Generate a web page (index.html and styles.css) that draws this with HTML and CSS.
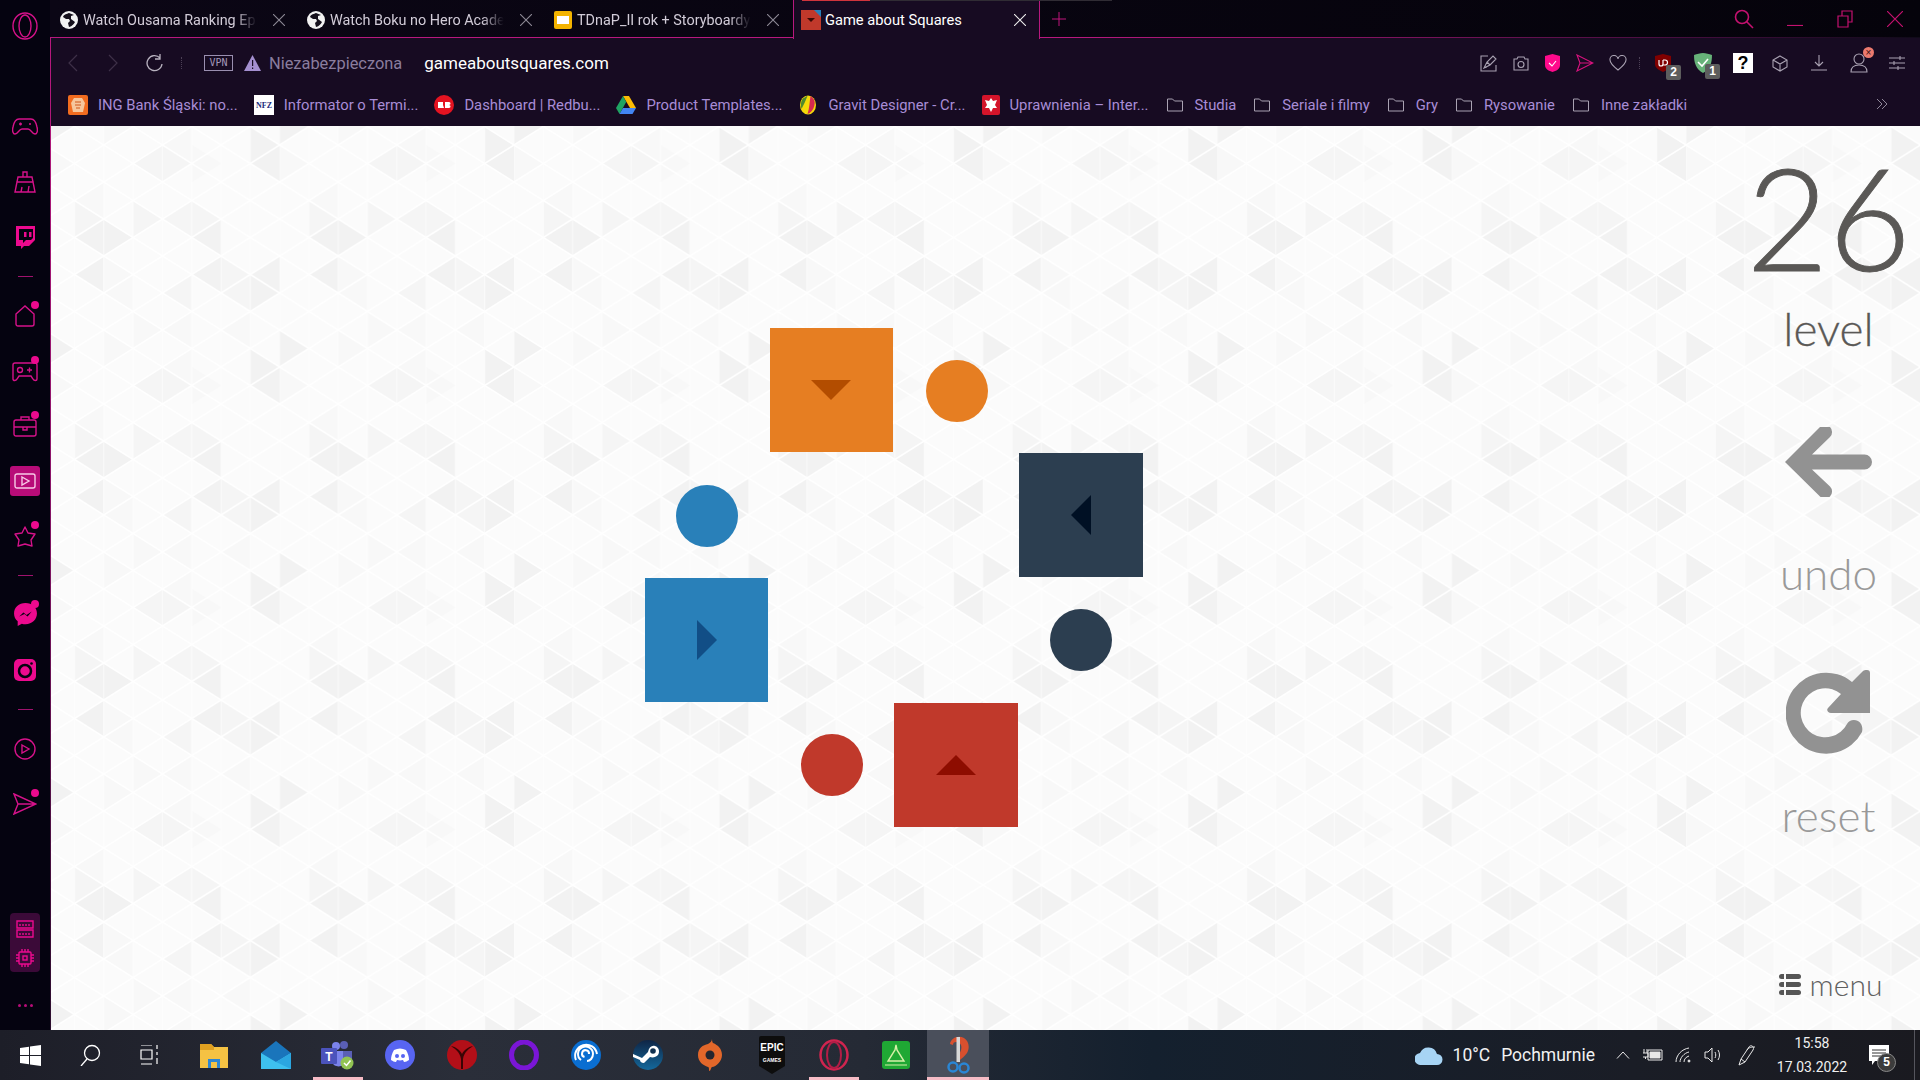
FILE: index.html
```html
<!DOCTYPE html>
<html lang="pl">
<head>
<meta charset="utf-8">
<title>Game about Squares</title>
<link rel="stylesheet" href="styles.css">
</head>
<body>
<div class="desktop">
  <div class="browser">
    <aside class="sidebar">
      <div class="logo"><svg width="26" height="28" viewBox="0 0 26 28"><ellipse cx="13" cy="14" rx="12" ry="13"/><ellipse cx="13" cy="14" rx="6" ry="11"/></svg></div>
      <div class="side-item"><svg width="26" height="24" viewBox="0 0 26 24"><path d="M7 4h12c3 0 5 3 6 8 1 4 0 7-2 7-3 0-4-5-7-5h-6c-3 0-4 5-7 5-2 0-3-3-2-7 1-5 3-8 6-8z"/><path d="M7 9h3M8.500 7.500v3M17 9h2"/></svg></div>
      <div class="side-item"><svg width="24" height="24" viewBox="0 0 24 24"><path d="M10 7V2h4v5M5 7h14l1 5H4zM4 12l-2 10h20l-2-10M8 22l1-5M15 22l1-6"/></svg></div>
      <div class="side-item"><svg width="24" height="24" viewBox="0 0 24 24"><path class="solid" d="M3 1h19v14l-6 6h-5l-3 3v-3H3zM6 4v11h4v3l3-3h5l2-2V4z"/><path class="solid" d="M11 7h2.500v5H11zM16 7h2.500v5H16z"/></svg></div>
      <div class="side-rule"></div>
      <div class="side-item dot"><svg width="20" height="22" viewBox="0 0 20 22"><path d="M1 9l9-8 9 8v10a2 2 0 0 1-2 2H3a2 2 0 0 1-2-2z"/></svg></div>
      <div class="side-item dot"><svg width="26" height="22" viewBox="0 0 26 22"><path d="M3 3h20a2 2 0 0 1 2 2v14c0 2-3 2-4 0l-2-3H7l-2 3c-1 2-4 2-4 0V5a2 2 0 0 1 2-2z"/><circle cx="8" cy="10" r="2.500"/><path d="M15 10h5M17.500 7.500v5"/></svg></div>
      <div class="side-item dot"><svg width="24" height="22" viewBox="0 0 24 22"><rect x="1" y="5" width="22" height="16" rx="2"/><path d="M8 5V2h8v3M1 12h22M10 12h4v3h-4z"/></svg></div>
      <div class="side-item"><div class="side-active"><svg width="22" height="16" viewBox="0 0 22 16"><rect x="1" y="1" width="20" height="14" rx="2"/><path d="M8 4l7 4-7 4z"/></svg></div></div>
      <div class="side-item dot"><svg width="22" height="22" viewBox="0 0 22 22"><path d="M11 2l3 6 7 1-4 6 1 6-7-2-7 2 1-6-4-6 7-1z" stroke-linejoin="round"/></svg></div>
      <div class="side-rule"></div>
      <div class="side-item dot"><svg width="25" height="25" viewBox="0 0 24 24"><path class="solid" d="M12 1C5.500 1 1 5.500 1 11c0 3 1.300 5.700 3.500 7.500V23l4-2.200c1.100.3 2.300.5 3.500.5 6.500 0 11-4.800 11-10.300S18.500 1 12 1z"/><path class="cut" d="M6 14l4-4 3 2.500L18 9l-4 5-3-2.500z"/></svg></div>
      <div class="side-item"><svg width="22" height="22" viewBox="0 0 22 22"><rect class="solid" width="22" height="22" rx="5"/><circle class="ring-dark" cx="11" cy="12" r="6"/><circle class="cut" cx="17.500" cy="4.500" r="1.300"/></svg></div>
      <div class="side-rule"></div>
      <div class="side-item"><svg width="22" height="22" viewBox="0 0 22 22"><circle cx="11" cy="11" r="10"/><path d="M8 7l7 4-7 4z"/></svg></div>
      <div class="side-item dot"><svg width="24" height="22" viewBox="0 0 24 22"><path d="M1 1l22 10L1 21l4-10zM5 11h18"/></svg></div>
      <div class="side-box">
        <svg width="18" height="18" viewBox="0 0 18 18"><path d="M1 1h16v7H1zM1 10h16v7H1zM4 6V4M7 6V4M10 6V4M13 6V4M4 15v-2M7 15v-2M10 15v-2M13 15v-2"/></svg>
        <svg width="20" height="20" viewBox="0 0 20 20"><rect x="4" y="4" width="12" height="12" rx="1"/><rect x="8" y="8" width="4" height="4"/><path d="M7 1v3M10 1v3M13 1v3M7 16v3M10 16v3M13 16v3M1 7h3M1 10h3M1 13h3M16 7h3M16 10h3M16 13h3"/></svg>
      </div>
      <div class="side-more"><span></span><span></span><span></span></div>
    </aside>

    <div class="main">
      <div class="tabstrip">
        <div class="tab">
          <svg class="fav" width="18" height="18" viewBox="0 0 18 18"><circle cx="9" cy="9" r="9" fill="#f2f2f2"/><path d="M9 2C7 3 4 3 3 6l3 2 3 0 1 2-2 2 1 4c2 0 5-3 6-5l-4-3V5l3-1z" fill="#15101c"/></svg>
          <span class="tab-title">Watch Ousama Ranking Ep</span>
          <svg class="tab-x" width="12" height="12" viewBox="0 0 12 12"><path d="M0 0l12 12M12 0L0 12"/></svg>
        </div>
        <div class="tab">
          <svg class="fav" width="18" height="18" viewBox="0 0 18 18"><circle cx="9" cy="9" r="9" fill="#f2f2f2"/><path d="M9 2C7 3 4 3 3 6l3 2 3 0 1 2-2 2 1 4c2 0 5-3 6-5l-4-3V5l3-1z" fill="#15101c"/></svg>
          <span class="tab-title">Watch Boku no Hero Acade</span>
          <svg class="tab-x" width="12" height="12" viewBox="0 0 12 12"><path d="M0 0l12 12M12 0L0 12"/></svg>
        </div>
        <div class="tab">
          <svg class="fav" width="18" height="18" viewBox="0 0 18 18"><rect width="18" height="18" rx="2" fill="#f4b400"/><rect x="3" y="5" width="12" height="8" fill="#fff"/></svg>
          <span class="tab-title">TDnaP_II rok + Storyboardy</span>
          <svg class="tab-x" width="12" height="12" viewBox="0 0 12 12"><path d="M0 0l12 12M12 0L0 12"/></svg>
        </div>
        <div class="tab tab-active">
          <svg class="fav" width="20" height="20" viewBox="0 0 20 20"><rect width="20" height="20" fill="#c0392b"/><path d="M13 0h7v7z" fill="#2980b9"/><path d="M6 8h8l-4 4z" fill="#3b0a05"/></svg>
          <span class="tab-title">Game about Squares</span>
          <svg class="tab-x" width="12" height="12" viewBox="0 0 12 12"><path d="M0 0l12 12M12 0L0 12"/></svg>
        </div>
        <svg class="tab-plus" width="14" height="14" viewBox="0 0 14 14"><path d="M7 0v14M0 7h14"/></svg>
        <div class="win-ctrl">
          <svg class="win-search" width="20" height="20" viewBox="0 0 20 20"><circle cx="8" cy="8" r="6.500"/><path d="M12.500 12.500L19 19"/></svg>
          <svg class="win-btn" width="16" height="14" viewBox="0 0 16 14"><path d="M0 13.500h16"/></svg>
          <svg class="win-btn" width="16" height="18" viewBox="0 0 16 18"><path d="M1 6h10v11H1zM5 6V1h10v11h-4"/></svg>
          <svg class="win-btn" width="16" height="16" viewBox="0 0 16 16"><path d="M0 0l16 16M16 0L0 16"/></svg>
        </div>
      </div>

      <div class="panel">
        <div class="addressbar">
          <svg class="nav" width="10" height="18" viewBox="0 0 10 18"><path d="M9 1L1 9l8 8"/></svg>
          <svg class="nav nav-fwd" width="10" height="18" viewBox="0 0 10 18"><path d="M1 1l8 8-8 8"/></svg>
          <svg class="nav-reload" width="18" height="18" viewBox="0 0 18 18"><path d="M15 4a7.500 7.500 0 1 0 2 6M15 0v5h-5"/></svg>
          <span class="vdots"></span>
          <span class="vpn">VPN</span>
          <svg class="warn" width="17" height="16" viewBox="0 0 17 16"><path d="M8.500 0L17 16H0z" fill="#a48fd0"/><path d="M8 5h1.200v6H8zM8 12.500h1.200V14H8z" fill="#170b22"/></svg>
          <span class="insecure">Niezabezpieczona</span>
          <span class="url">gameaboutsquares.com</span>
          <div class="tools">
            <svg class="t t-edit" width="18" height="18" viewBox="0 0 18 18"><path d="M8 2H1v15h15v-6"/><path d="M4 14l3-6 6-6 3 3-6 6zM7 8l3 3M4 14l3-1"/></svg>
            <svg class="t t-cam" width="16" height="15" viewBox="0 0 16 15"><path d="M1 3h3l1-2h6l1 2h3v11H1z"/><circle cx="8" cy="8.500" r="3"/></svg>
            <svg class="t t-shield" width="15" height="18" viewBox="0 0 15 18"><path d="M7.500 0L15 2v9c0 4-4 6-7.500 7C4 17 0 15 0 11V2z" fill="#ff0a8c" stroke="none"/><path d="M4 9l3 3 4-5" stroke="#fff"/></svg>
            <svg class="t t-send" width="18" height="18" viewBox="0 0 18 18"><path d="M1 1l16 8-16 8 3-8zM4 9h13"/></svg>
            <svg class="t t-heart" width="18" height="16" viewBox="0 0 18 16"><path d="M9 15C4 11 1 8 1 5a4 4 0 0 1 8-1 4 4 0 0 1 8 1c0 3-3 6-8 10z"/></svg>
            <span class="vdots t-dots"></span>
            <span class="ext t-ub"><svg width="16" height="18" viewBox="0 0 16 18"><path d="M8 0l8 2v8c0 4-4 6-8 8-4-2-8-4-8-8V2z" fill="#800000"/><path d="M4 6v4a2 2 0 0 0 4 0V6M8 6h2a2.500 2.500 0 0 1 0 5H8" fill="none" stroke="#fff" stroke-width="1.200"/></svg><b>2</b></span>
            <span class="ext t-ag"><svg width="18" height="20" viewBox="0 0 18 20"><path d="M9 0c3 0 6 1 9 2 0 8-2 14-9 18C2 16 0 10 0 2c3-1 6-2 9-2z" fill="#67b279"/><path d="M4 9l4 4 6-7" fill="none" stroke="#fff" stroke-width="1.600"/></svg><b>1</b></span>
            <span class="t-q">?</span>
            <svg class="t t-cube" width="16" height="17" viewBox="0 0 16 17"><path d="M8 1l7 4v7l-7 4-7-4V5zM1 5l7 4 7-4M8 9v7"/></svg>
            <svg class="t t-dl" width="16" height="16" viewBox="0 0 16 16"><path d="M8 0v11M4 7l4 4 4-4M0 15h16"/></svg>
            <span class="t-user"><svg class="t" width="18" height="20" viewBox="0 0 18 20"><circle cx="9" cy="6" r="5"/><path d="M1 19c0-6 4-7 8-7s8 1 8 7z"/></svg><i>×</i></span>
            <svg class="t t-sliders" width="16" height="16" viewBox="0 0 16 16"><path d="M0 3h16M0 8h16M0 13h16M11 1v4M5 6v4M9 11v4"/></svg>
          </div>
        </div>
        <div class="bookmarks">
          <div class="bm"><svg width="20" height="20" viewBox="0 0 20 20"><rect width="20" height="20" rx="2" fill="#f26c1f"/><path d="M6 3h8l3 5-2 9H5L3 8z" fill="#f6c79c"/><path d="M7 7h6M7 10h6M8 13h4" stroke="#d0561a"/></svg><span>ING Bank Śląski: no...</span></div>
          <div class="bm"><svg width="20" height="20" viewBox="0 0 20 20"><rect width="20" height="20" fill="#fff"/><text x="10" y="13" text-anchor="middle" class="nfz">NFZ</text></svg><span>Informator o Termi...</span></div>
          <div class="bm"><svg width="20" height="20" viewBox="0 0 20 20"><circle cx="10" cy="10" r="10" fill="#e41321"/><path d="M4 7h5v3l1 3H4zM11 7h4c2 0 2 3 0 3 2 0 2 3 0 3h-4z" fill="#fff"/></svg><span>Dashboard | Redbu...</span></div>
          <div class="bm"><svg width="20" height="18" viewBox="0 0 20 18"><path d="M7 0h6l7 12h-6z" fill="#fbbc04"/><path d="M7 0l3.200 6L3.500 18 0 12z" fill="#1fa463"/><path d="M3.500 18L7 12h13l-3.500 6z" fill="#4285f4"/></svg><span>Product Templates...</span></div>
          <div class="bm"><svg width="20" height="20" viewBox="-1.500 0 20 20"><ellipse cx="8.500" cy="10" rx="8" ry="9.500" fill="#f5d90a"/><path d="M11 1c3 2 5 5 4 9-1 5-4 8-7 9 2-6 2-12 3-18z" fill="#d62a4e"/><path d="M3 4c1-1 4-3 5-3-2 5-4 9-6 13-1-3-1-7 1-10z" fill="#4f8a2e"/></svg><span>Gravit Designer - Cr...</span></div>
          <div class="bm"><svg width="18" height="20" viewBox="0 0 18 20"><rect width="18" height="20" rx="2" fill="#d4142a"/><path d="M9 3l2 3 4-1-2 5 2 3-4 0-2 4-2-4-4 0 2-3-2-5 4 1z" fill="#fff"/></svg><span>Uprawnienia – Inter...</span></div>
          <div class="bm bm-folder"><svg class="folder" width="16" height="14" viewBox="0 0 16 14"><path d="M.5 1h5l2 2h8v10H.5z"/></svg><span>Studia</span></div>
          <div class="bm bm-folder"><svg class="folder" width="16" height="14" viewBox="0 0 16 14"><path d="M.5 1h5l2 2h8v10H.5z"/></svg><span>Seriale i filmy</span></div>
          <div class="bm bm-folder"><svg class="folder" width="16" height="14" viewBox="0 0 16 14"><path d="M.5 1h5l2 2h8v10H.5z"/></svg><span>Gry</span></div>
          <div class="bm bm-folder"><svg class="folder" width="16" height="14" viewBox="0 0 16 14"><path d="M.5 1h5l2 2h8v10H.5z"/></svg><span>Rysowanie</span></div>
          <div class="bm bm-folder"><svg class="folder" width="16" height="14" viewBox="0 0 16 14"><path d="M.5 1h5l2 2h8v10H.5z"/></svg><span>Inne zakładki</span></div>
          <svg class="bm-more" width="12" height="10" viewBox="0 0 12 10"><path d="M1 0l5 5-5 5M6 0l5 5-5 5"/></svg>
        </div>

        <main class="game">
          <svg class="game-bg" width="100%" height="100%">
            <defs>
              <pattern id="tiles" x="228.6" y="19" width="234.4" height="222" patternUnits="userSpaceOnUse">
                <rect x="0" y="0" width="234.400" height="222" fill="#fbfbfb"/>
                <g fill="#f2f2f2">
                  <polygon points="234.4,0 205.1,-18.5 205.1,18.5"/>
                  <polygon points="234.4,222 205.1,203.5 205.1,240.5"/>
                  <polygon points="205.1,18.5 234.4,0 234.4,37"/>
                  <polygon points="29.3,203.5 0,185 0,222"/>
                  <polygon points="29.3,92.5 58.6,74 58.6,111"/>
                  <polygon points="87.9,92.5 58.6,74 58.6,111"/>
                  <polygon points="146.5,92.5 175.8,74 175.8,111"/>
                  <polygon points="205.1,129.5 234.4,111 234.4,148"/>
                  <polygon points="29.3,129.5 58.6,111 58.6,148"/>
                  <polygon points="146.5,129.5 175.8,111 175.8,148"/>
                  <polygon points="234.4,148 205.1,129.5 205.1,166.5"/>
                </g>
                <g fill="#f5f5f5">
                  <polygon points="87.9,18.5 117.2,0 117.2,37"/>
                  <polygon points="146.5,18.5 117.2,0 117.2,37"/>
                  <polygon points="117.2,74 87.9,55.5 87.9,92.5"/>
                  <polygon points="117.2,74 146.5,55.5 146.5,92.5"/>
                  <polygon points="117.2,148 146.5,129.5 146.5,166.5"/>
                  <polygon points="205.1,129.5 175.8,111 175.8,148"/>
                  <polygon points="58.6,74 29.3,55.5 29.3,92.5"/>
                  <polygon points="175.8,74 146.5,55.5 146.5,92.5"/>
                  <polygon points="175.8,148 205.1,129.5 205.1,166.5"/>
                </g>
                <g fill="#f8f8f8">
                  <polygon points="117.2,0 146.5,-18.5 146.5,18.5"/>
                  <polygon points="117.2,222 146.5,203.5 146.5,240.5"/>
                  <polygon points="117.2,185 146.5,166.5 146.5,203.5"/>
                  <polygon points="117.2,185 87.9,166.5 87.9,203.5"/>
                  <polygon points="175.8,185 205.1,166.5 205.1,203.5"/>
                  <polygon points="87.9,203.5 58.6,185 58.6,222"/>
                  <polygon points="29.3,55.5 58.6,37 58.6,74"/>
                  <polygon points="87.9,129.5 58.6,111 58.6,148"/>
                  <polygon points="58.6,148 87.9,129.5 87.9,166.5"/>
                  <polygon points="175.8,18.5 146.5,0 146.5,37"/>
                  <polygon points="29.3,18.5 0,0 0,37"/>
                </g>
                <path class="tile-v" d="M0 0V222M29.300 0V222M58.600 0V222M87.900 0V222M117.200 0V222M146.500 0V222M175.800 0V222M205.100 0V222"/>
                <path class="tile-d" d="M0 -148L234.400 0M0 -111L234.400 37M0 -74L234.400 74M0 -37L234.400 111M0 0L234.400 148M0 37L234.400 185M0 74L234.400 222M0 111L234.400 259M0 148L234.400 296M0 185L234.400 333M0 222L234.400 370M0 0L234.400 -148M0 37L234.400 -111M0 74L234.400 -74M0 111L234.400 -37M0 148L234.400 0M0 185L234.400 37M0 222L234.400 74M0 259L234.400 111M0 296L234.400 148M0 333L234.400 185M0 370L234.400 222"/>
              </pattern>
            </defs>
            <rect width="100%" height="100%" fill="url(#tiles)"/>
          </svg>
          <div class="board-wrap">
            <div class="board">
              <div class="square orange c2 r1"><span class="arrow down"></span></div>
              <div class="goal orange c3 r1"></div>
              <div class="goal blue c1 r2"></div>
              <div class="square navy c4 r2"><span class="arrow left"></span></div>
              <div class="square blue c1 r3"><span class="arrow right"></span></div>
              <div class="goal navy c4 r3"></div>
              <div class="goal red c2 r4"></div>
              <div class="square red c3 r4"><span class="arrow up"></span></div>
            </div>
          </div>
          <div class="hud">
            <div class="level-num">26</div>
            <div class="hud-label dark">level</div>
            <svg class="hud-undo" width="87" height="70" viewBox="0 0 87 70"><path d="M87 35a7.500 7.500 0 0 1-7.500 7.500H27l18 17a7 7 0 0 1-10 10L0 35 35 0a7 7 0 0 1 10 10L27 27.500h52.500A7.500 7.500 0 0 1 87 35z"/></svg>
            <div class="hud-label undo-label">undo</div>
            <svg class="hud-reset" width="85" height="85" viewBox="0 0 85 85"><path d="M81 0c2 0 3 1 3 3v40H45c-3 0-5-3-3-5L55 24a24.500 24.500 0 1 0 6 30c2-4 7-5 11-3 4 2 5 7 4 11A40.500 40.500 0 1 1 66 12l11-11c1-1 2-1 4-1z"/></svg>
            <div class="hud-label reset-label">reset</div>
            <div class="menu">
              <span class="menu-ic"><i></i><i></i><i></i></span>
              <span>menu</span>
            </div>
          </div>
        </main>
      </div>
    </div>
  </div>

  <footer class="taskbar">
    <div class="apps">
      <div class="app sys"><svg width="21" height="21" viewBox="0 0 21 21"><path fill="#fff" d="M0 3l9-1.300V10H0zM10 1.500L21 0v10H10zM0 11h9v8.300L0 18zM10 11h11v10l-11-1.500z"/></svg></div>
      <div class="app sys"><svg width="22" height="22" viewBox="0 0 22 22" fill="none" stroke="#fff" stroke-width="1.300"><circle cx="13" cy="9" r="7.500"/><path d="M8 15l-6 7"/></svg></div>
      <div class="app sys sys-last"><svg width="20" height="20" viewBox="0 0 20 20" fill="none" stroke="#fff" stroke-width="1.200"><path d="M1 0h11M1 19h11M1 5h11v9H1zM17 0v4M17 7v3M17 13v6"/></svg></div>
      <div class="app"><svg width="28" height="26" viewBox="0 0 28 26"><path d="M0 2h11l3 3h14v21H0z" fill="#f5c243"/><path d="M0 2h11l3 3v3H0z" fill="#e0a020"/><path d="M8 26v-9h12v9h-3v-6h-6v6z" fill="#2f86d0"/></svg></div>
      <div class="app"><svg width="30" height="28" viewBox="0 0 30 28"><path d="M15 0L0 12v16h30V12z" fill="#1a75bb"/><path d="M0 12l15 9 15-9v16H0z" fill="#3ec0ee"/><path d="M15 21L30 12v16z" fill="#2ba6e0"/></svg></div>
      <div class="app on"><svg width="34" height="30" viewBox="0 0 34 30"><circle cx="23" cy="5" r="4" fill="#5a5fb5"/><circle cx="15" cy="6" r="4" fill="#7b83eb"/><path d="M18 11h13v10c-2 4-9 4-12 2z" fill="#5a5fb5"/><path d="M10 11h12v14c-4 3-10 1-11-3z" fill="#7b83eb"/><rect x="0" y="8" width="16" height="16" rx="1" fill="#4b53bc"/><text x="8" y="21" text-anchor="middle" class="teams-t">T</text><circle cx="26" cy="23" r="6.500" fill="#92c353"/><path d="M23 23l2.500 2.500 4-5" stroke="#fff" fill="none" stroke-width="1.500"/></svg></div>
      <div class="app"><svg width="30" height="30" viewBox="0 0 30 30"><circle cx="15" cy="15" r="15" fill="#5865f2"/><path d="M9 10c4-2 8-2 12 0 2 3 3 7 3 10-2 1-3 2-5 2l-1-2c-2 .5-4 .5-6 0l-1 2c-2 0-3-1-5-2 0-3 1-7 3-10z" fill="#fff"/><circle cx="12" cy="16" r="2" fill="#5865f2"/><circle cx="18" cy="16" r="2" fill="#5865f2"/></svg></div>
      <div class="app"><svg width="30" height="30" viewBox="0 0 30 30"><circle cx="15" cy="15" r="15" fill="#b30f18"/><path d="M4 6c5 1 9 4 11 8 2-4 6-7 11-8-4 3-9 6-10 13v10h-2V19C13 12 8 9 4 6z" fill="#3a0505"/></svg></div>
      <div class="app"><svg width="30" height="30" viewBox="0 0 30 30"><ellipse cx="15" cy="15" rx="12.500" ry="13" fill="none" stroke="#7a16d6" stroke-width="5"/></svg></div>
      <div class="app"><svg width="30" height="30" viewBox="0 0 30 30"><circle cx="15" cy="15" r="15" fill="#0a6ed1"/><path d="M5 20A11 11 0 1 1 26 14M10 20A7.500 7.500 0 1 1 22 14c0 4-3 7-6 7M13.500 17A3.500 3.500 0 1 1 18 14" fill="none" stroke="#fff" stroke-width="2"/></svg></div>
      <div class="app"><svg width="30" height="30" viewBox="0 0 30 30"><defs><linearGradient id="steamg" x1="0" y1="0" x2="0" y2="1"><stop offset="0" stop-color="#0f2545"/><stop offset="1" stop-color="#14699c"/></linearGradient></defs><circle cx="15" cy="15" r="15" fill="url(#steamg)"/><path d="M0 14l9 4 6-6c1-5 4-7 7-6 4 1 5 6 3 9-2 2-5 3-8 2l-6 6c-3 0-4-2-4-3L0 17z" fill="#fff"/><circle cx="20" cy="11" r="2.800" fill="#11314f"/></svg></div>
      <div class="app"><svg width="24" height="32" viewBox="0 0 24 32"><path d="M14 0c0 3 1 4 1 4 5 2 9 6 9 12s-6 12-10 12c-1 0-1 4-3 4 0-2 0-4-1-4C5 26 0 23 0 16S5 6 10 5c2-1 4-3 4-5z" fill="#e2672a"/><circle cx="12" cy="16" r="4.500" fill="#24262f"/></svg></div>
      <div class="app"><svg width="26" height="38" viewBox="0 0 26 38"><path d="M2 0h22a2 2 0 0 1 2 2v28l-13 8-13-8V2a2 2 0 0 1 2-2z" fill="#0d0d0d"/><text x="13" y="15" text-anchor="middle" class="epic-1">EPIC</text><text x="13" y="26" text-anchor="middle" class="epic-2">GAMES</text></svg></div>
      <div class="app on"><svg width="30" height="32" viewBox="0 0 30 32"><ellipse cx="15" cy="16" rx="13.500" ry="14.500" fill="none" stroke="#d0244f" stroke-width="2.500"/><ellipse cx="15" cy="16" rx="7" ry="13" fill="none" stroke="#b31d46" stroke-width="2"/></svg></div>
      <div class="app"><svg width="28" height="28" viewBox="0 0 28 28"><rect width="28" height="28" rx="3" fill="#1fa834"/><path d="M14 4l1 5 7 11H6l7-11z" fill="none" stroke="#d6f0a8" stroke-width="1.400"/><path d="M3 24h22" stroke="#d6f0a8"/></svg></div>
      <div class="app on active"><svg width="26" height="38" viewBox="0 0 26 38"><path d="M5 8C6 2 13-1 19 2c5 3 6 10 3 15-2 3-5 5-7 7h-3l2-6c2-3 3-6 2-9-1-2-3-3-5-3-2 0-3 1-3 3z" fill="#d9502e"/><path d="M11.500 1h3.500v25h-3.500z" fill="#d8d8d8"/><circle cx="8" cy="31" r="4.500" fill="none" stroke="#2a86d4" stroke-width="2.500"/><circle cx="19" cy="32" r="4.500" fill="none" stroke="#2a86d4" stroke-width="2.500"/></svg></div>
    </div>
    <div class="tray">
      <svg class="cloud" width="28" height="19" viewBox="0 0 28 19"><path d="M6 19a6 6 0 0 1-1-12 9 9 0 0 1 17 1 5.500 5.500 0 0 1 0 11z" fill="#a7d4f4"/></svg>
      <span class="weather">10°C</span>
      <span class="weather weather-txt">Pochmurnie</span>
      <span class="tray-ic chevron"><svg width="14" height="8" viewBox="0 0 14 8"><path d="M1 7.500L7 1l6 6.500"/></svg></span>
      <span class="tray-ic"><svg width="20" height="12" viewBox="0 0 20 12"><path d="M1 0v4M4 0v4M0 4h5v4H0M2.500 8v2M5 1h14v10H5z"/><path class="fill-w" d="M7 3h10v6H7z"/></svg></span>
      <span class="tray-ic"><svg width="16" height="16" viewBox="0 0 16 16"><path d="M1 15C1 8 7 2 14 1M5 15c0-4 4-9 9-10M9 15c0-3 2-5 5-6"/><circle class="fill-w" cx="14" cy="14" r="1"/></svg></span>
      <span class="tray-ic tray-vol"><svg width="18" height="16" viewBox="0 0 18 16"><path d="M1 5h3l4-4v14l-4-4H1zM11 5c1 2 1 4 0 6M14 3c2 3 2 7 0 10"/></svg></span>
      <span class="tray-ic tray-pen"><svg width="18" height="22" viewBox="0 0 18 22"><path d="M1 21l2-6L11 3c2-3 6 0 4 3L7 18zM3 15l4 3M9 6c2-3 5-3 8-3"/></svg></span>
      <div class="clock"><span>15:58</span><span>17.03.2022</span></div>
      <div class="notify"><svg width="20" height="20" viewBox="0 0 20 20"><path d="M0 0h20v16H6l-3 4v-4H0z" fill="#fff"/><path d="M3 5h14M3 8h14M3 11h14" stroke="#333"/></svg><b>5</b></div>
      <span class="show-desk"></span>
    </div>
  </footer>
</div>
</body>
</html>
```
FILE: styles.css
```css
* { box-sizing: border-box; }
html, body { margin: 0; padding: 0; height: 100%; overflow: hidden; }
body { font-family: Roboto, "Liberation Sans", sans-serif; background: #000; }
svg { display: block; flex: none; }

.desktop { width: 1920px; height: 1080px; display: flex; flex-direction: column; }
.browser { flex: 1; display: flex; min-height: 0; }

/* sidebar */
.sidebar { width: 50px; flex: none; background: #050310; display: flex; flex-direction: column; color: #d6128a; }
.sidebar svg { fill: none; stroke: currentColor; stroke-width: 1.4; }
.sidebar .solid { fill: #ec0a8e; stroke: none; }
.sidebar .cut { fill: #050310; stroke: none; }
.sidebar .ring-dark { stroke: #050310; stroke-width: 2.5; }
.logo { height: 52px; margin-bottom: 47px; padding-top: 12px; display: flex; justify-content: center; }
.side-item { position: relative; height: 55px; display: flex; align-items: center; justify-content: center; }
.side-item.dot::after { content: ""; position: absolute; left: 31px; top: 13px; width: 8px; height: 8px; border-radius: 50%; background: #ec0a8e; }
.side-rule { height: 24px; display: flex; align-items: center; justify-content: center; }
.side-rule::before { content: ""; width: 15px; height: 1px; background: #a0126e; }
.side-active { width: 30px; height: 30px; border-radius: 3px; background: #b80c78; display: flex; align-items: center; justify-content: center; color: #f7c9e6; }
.side-box { width: 30px; height: 59px; margin: auto 0 0 10px; border-radius: 4px; background: #3b0a38; color: #ec0a8e; display: flex; flex-direction: column; align-items: center; justify-content: space-between; padding: 7px 0 4px; }
.side-more { height: 58px; display: flex; gap: 3px; justify-content: center; align-items: center; padding-top: 8px; }
.side-more span { width: 3px; height: 3px; border-radius: 50%; background: #b80c78; }

.main { flex: 1; min-width: 0; display: flex; flex-direction: column; }

/* tabs */
.tabstrip { height: 38px; flex: none; display: flex; padding-left: 2px; background: linear-gradient(90deg, #0b0615, #05030b); position: relative; border-bottom: 1px solid; border-image: linear-gradient(90deg, #b8187e 0%, #b8187e 55%, #3b0d38 90%, #0f0a18 100%) 1; }
.tab { width: 247px; height: 38px; flex: none; display: flex; align-items: center; padding: 2px 14px 0 8px; gap: 5px; color: #d2ccd8; font-size: 14.4px; }
.tab-title { width: 186px; white-space: nowrap; overflow: hidden; -webkit-mask-image: linear-gradient(90deg, #000 84%, transparent 96%); mask-image: linear-gradient(90deg, #000 84%, transparent 96%); }
.tab-x { margin-left: 4px; fill: none; stroke: #8d8996; stroke-width: 1.1; }
.tab-active { background: #170b22; border: solid #b8187e; border-width: 0 1px; color: #fff; padding: 2px 13px 0 7px; gap: 4px; position: relative; z-index: 1; height: 39px; padding-bottom: 1px; font-size: 14.7px; }
.tab-active::before { content: ""; position: absolute; left: 8px; top: 0; width: 310px; height: 1px; background: linear-gradient(90deg, #d0343c 0 22%, #302c34 22%); }
.tab-active .tab-title { width: 180px; -webkit-mask-image: none; mask-image: none; }
.tab-active .tab-x { stroke: #eee; margin-left: 11px; }
.tab-plus { margin: 12px 0 0 12px; fill: none; stroke: #c0157c; stroke-width: 1; }
.win-ctrl { margin-left: auto; display: flex; align-items: center; color: #c4116f; padding-right: 17px; }
.win-ctrl svg { fill: none; stroke: currentColor; stroke-width: 1.2; }
.win-search { margin-right: 33px; stroke-width: 1.6 !important; }
.win-btn { margin-left: 34px; }
.win-search + .win-btn { margin-left: 0; }

/* panel */
.panel { flex: 1; min-height: 0; display: flex; flex-direction: column; border-left: 1px solid; border-image: linear-gradient(180deg, #b8187e 0%, #8a1468 45%, #2a0c2c 100%) 1; }
.addressbar { height: 50px; flex: none; background: #170b22; display: flex; align-items: center; position: relative; }
.nav { margin-left: 17px; fill: none; stroke: #3e3048; stroke-width: 1.2; }
.nav-fwd { margin-left: 30px; }
.nav-reload { margin-left: 27px; fill: none; stroke: #b9b3c0; stroke-width: 1.3; }
.vdots { width: 1px; height: 12px; margin-left: 18px; border-left: 1px dotted #4c4056; }
.vpn { margin-left: 22px; width: 29px; height: 16px; border: 1px solid #9a8fb0; font: 10px/14px "DejaVu Sans Mono", monospace; color: #a397b8; text-align: center; letter-spacing: 0; }
.warn { margin-left: 11px; }
.insecure { margin-left: 8px; font-size: 16.4px; color: #8a7d9e; white-space: nowrap; }
.url { margin-left: 22px; font-size: 17px; color: #fff; white-space: nowrap; }
.tools { position: absolute; left: 0; right: 0; top: 0; bottom: 0; pointer-events: none; display: flex; align-items: center; justify-content: flex-end; padding-right: 15px; }
.t { fill: none; stroke: #a9a2b2; stroke-width: 1.1; }
.t-edit { margin-right: 15px; }
.t-cam { margin-right: 16px; }
.t-shield { margin-right: 16px; }
.t-send { margin-right: 15px; stroke: #d9127f; }
.t-heart { margin-right: 12px; }
.t-dots { margin: 0 15px 0 0; }
.ext { position: relative; display: block; }
.ext b { position: absolute; left: 11px; top: 11px; width: 15px; height: 15px; border-radius: 2px; background: #5d5d5d; color: #fff; font: 700 12px/15px "Liberation Sans", sans-serif; text-align: center; }
.t-ub { margin-right: 23px; }
.t-ag { margin-right: 21px; }
.t-q { width: 20px; height: 20px; margin-right: 19px; background: #fff; color: #000; font: 700 18px/20px "Liberation Sans", sans-serif; text-align: center; }
.t-cube { margin-right: 23px; }
.t-dl { margin-right: 23px; }
.t-user { position: relative; display: block; margin-right: 21px; }
.t-user i { position: absolute; left: 13px; top: -6px; width: 11px; height: 11px; border-radius: 50%; background: #ec7a6e; color: #3a1010; font: 10px/11px "Liberation Sans", sans-serif; text-align: center; }

.bookmarks { height: 38px; flex: none; background: #170b22; display: flex; align-items: center; padding: 0 0 5px 17px; gap: 16px; position: relative; }
.bm { display: flex; align-items: center; gap: 10px; color: #a88dd6; font-size: 14.8px; white-space: nowrap; }
.bm-folder { gap: 12px; margin-left: 2px; }
.folder { fill: none; stroke: #a9a2b2; stroke-width: 1; }
.bm-more { position: absolute; right: 32px; top: 11px; fill: none; stroke: #8f8799; stroke-width: 1; }
.nfz { font: 700 8px "Liberation Serif", serif; fill: #1a2a7a; }

/* game */
.game { flex: 1; min-height: 0; position: relative; display: flex; background: #fbfbfb; overflow: hidden; }
.game-bg { position: absolute; left: 0; top: 0; }
.tile-v { fill: none; stroke: #ffffff; stroke-opacity: .6; stroke-width: 1; }
.tile-d { fill: none; stroke: #ffffff; stroke-width: 1.6; }
.board-wrap { flex: 1; position: relative; display: flex; align-items: center; justify-content: center; padding-left: .6px; }
.board { display: grid; grid-template-columns: repeat(4, 124.8px); grid-template-rows: repeat(4, 124.8px); }
.c1 { grid-column: 1; } .c2 { grid-column: 2; } .c3 { grid-column: 3; } .c4 { grid-column: 4; }
.r1 { grid-row: 1; } .r2 { grid-row: 2; } .r3 { grid-row: 3; } .r4 { grid-row: 4; }
.square { width: 123.6px; height: 124px; display: flex; align-items: center; justify-content: center; }
.goal { width: 62px; height: 62px; border-radius: 50%; align-self: center; justify-self: center; }
.orange { background: #e67e22; }
.blue { background: #2980b9; }
.navy { background: #2c3e50; }
.red { background: #c0392b; }
.arrow { width: 0; height: 0; border-style: solid; border-color: transparent; }
.down { border-width: 20px 20px 0; border-top-color: #b34d00; }
.up { border-width: 0 20px 20px; border-bottom-color: #8e0d00; }
.left { border-width: 20px 20px 20px 0; border-right-color: #001024; }
.right { border-width: 20px 0 20px 20px; border-left-color: #114e86; }

.hud { width: 183px; flex: none; position: relative; display: flex; flex-direction: column; align-items: center; font-family: Lato, "Open Sans", sans-serif; font-weight: 300; color: #999; }
.level-num { height: 150px; margin-top: 15px; font-size: 142px; line-height: 150px; color: #5a5856; -webkit-text-stroke: .9px #5a5856; }
.hud-label { font-size: 44px; line-height: 56px; height: 56px; }
.hud-label.dark { font-size: 46px; color: #5a5856; margin-top: 10px; -webkit-text-stroke: .3px #5a5856; }
.hud-undo { margin-top: 70px; fill: #929292; }
.undo-label { margin-top: 48px; }
.hud-reset { margin-top: 69px; fill: #929292; }
.reset-label { margin-top: 32px; }
.menu { margin: auto 0 31px 4px; display: flex; align-items: center; gap: 9px; font-size: 30px; line-height: 30px; color: #606060; }
.menu-ic { display: flex; flex-direction: column; gap: 3px; }
.menu-ic i { display: block; width: 22px; height: 5px; border-radius: 3px; background: linear-gradient(90deg, #555 5px, transparent 5px 7px, #555 7px); }

/* taskbar */
.taskbar { height: 50px; flex: none; display: flex; align-items: stretch; background: linear-gradient(90deg, #1d1e28 0%, #2a2e39 24%, #252a35 45%, #14202e 60%, #1a1d26 85%, #1a1a20 100%); color: #fff; }
.apps { display: flex; }
.app { width: 62px; display: flex; align-items: center; justify-content: center; position: relative; }
.sys { width: 60px; }
.sys-last { margin-right: 3px; }
.app.on::after { content: ""; position: absolute; left: 6px; right: 6px; bottom: 0; height: 3px; background: #f6bcc6; }
.app.active { background: #4a4f5b; }
.app.active::after { left: 0; right: 0; }
.teams-t { font: 700 12px "Liberation Sans", sans-serif; fill: #fff; }
.epic-1 { font: 700 10px "Liberation Sans", sans-serif; fill: #fff; }
.epic-2 { font: 700 5px "Liberation Sans", sans-serif; fill: #fff; }
.tray { margin-left: auto; display: flex; align-items: center; padding-right: 5px; font-size: 17.5px; }
.cloud { margin-right: 10px; }
.weather { white-space: nowrap; color: #f2f2f2; }
.weather-txt { margin-left: 11px; margin-right: 13px; }
.tray-ic { width: 30px; height: 22px; display: flex; align-items: center; justify-content: center; }
.tray-ic svg { fill: none; stroke: #e8e8e8; stroke-width: 1; }
.tray-ic .fill-w { fill: #e8e8e8; }
.tray-vol { margin-right: 4px; }
.tray-pen { margin-right: 5px; }
.clock { width: 80px; margin-left: 5px; display: flex; flex-direction: column; align-items: center; gap: 7px; font-size: 14px; line-height: 17px; color: #f0f0f0; }
.notify { position: relative; width: 40px; margin-left: 7px; display: flex; justify-content: center; }
.notify b { position: absolute; left: 18px; top: 8px; width: 19px; height: 19px; border-radius: 50%; background: #3c3c3c; border: 1px solid #888; color: #fff; font: 700 12px/17px "Liberation Sans", sans-serif; text-align: center; }
.show-desk { width: 1px; height: 50px; margin-left: 15px; background: #55555d; }
```
